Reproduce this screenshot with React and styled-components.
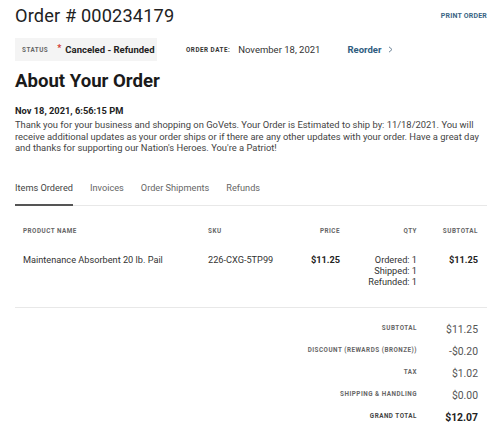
import React from "react";
import styled, { createGlobalStyle } from "styled-components";

const Global = createGlobalStyle`
  html, body { margin: 0; padding: 0; background: #fff; }
  body { font-family: Roboto, "Liberation Sans", Arial, sans-serif; color: #333; }
  * { box-sizing: border-box; }
`;

const Page = styled.div`
  width: 500px;
  padding: 5px 13px 0 15px;
`;

const HeaderRow = styled.div`
  display: flex;
  justify-content: space-between;
  align-items: flex-start;
`;

const Title = styled.h1`
  margin: 0;
  font-size: 18.2px;
  line-height: 22px;
  font-weight: 400;
  color: #222;
  letter-spacing: 0.15px;
`;

const LinkButton = styled.a`
  margin-top: 6px;
  font-size: 7px;
  line-height: 10px;
  font-weight: 700;
  letter-spacing: 0.2px;
  color: #3a6584;
  text-decoration: none;
  text-transform: uppercase;
`;

const MetaRow = styled.div`
  display: flex;
  align-items: center;
  margin-top: 11px;
  height: 23px;
`;

const StatusBox = styled.div`
  display: flex;
  align-items: center;
  flex: none;
  height: 23px;
  width: 142px;
  padding: 0 0 0 7px;
  background: #f4f4f4;
  white-space: nowrap;
`;

const SmallLabel = styled.span`
  font-size: 6.3px;
  font-weight: 700;
  letter-spacing: 0.5px;
  text-transform: uppercase;
  white-space: nowrap;
  color: ${(p) => p.$color || "#666"};
`;

const Asterisk = styled.span`
  color: #d0342c;
  font-size: 9px;
  font-weight: 700;
  margin: 5px 4px 0 9px;
  align-self: flex-start;
`;

const StatusText = styled.span`
  font-size: 9.5px;
  font-weight: 700;
  color: #222;
`;

const DateGroup = styled.div`
  display: flex;
  align-items: center;
  margin-left: 29px;
  gap: 8px;
`;

const DateValue = styled.span`
  font-size: 9.5px;
  color: #333;
  white-space: nowrap;
`;

const Reorder = styled.a`
  display: flex;
  align-items: center;
  gap: 7px;
  margin-left: 27px;
  font-size: 9.5px;
  font-weight: 700;
  color: #2f5d80;
  text-decoration: none;
`;

const Chevron = styled.svg`
  width: 5px;
  height: 7px;
`;

const Heading = styled.h2`
  margin: 9px 0 0;
  font-size: 18.6px;
  line-height: 22px;
  font-weight: 700;
  color: #1a1a1a;
`;

const Stamp = styled.div`
  margin-top: 13px;
  font-size: 9.3px;
  line-height: 11.3px;
  font-weight: 700;
  color: #222;
`;

const Message = styled.p`
  margin: 3px 0 0;
  font-size: 9.4px;
  line-height: 11.3px;
  color: #444;
`;

const Tabs = styled.div`
  display: flex;
  gap: 17px;
  margin-top: 29px;
  border-bottom: 1px solid #e8e8e8;
`;

const Tab = styled.div`
  font-size: 9.2px;
  line-height: 12px;
  color: ${(p) => (p.$active ? "#444" : "#666")};
  padding-bottom: 10px;
  margin-bottom: -1px;
  border-bottom: 2px solid ${(p) => (p.$active ? "#555" : "transparent")};
`;

const Grid = styled.div`
  display: grid;
  grid-template-columns: 185px 82px 50px 77px 61px;
  padding: 0 9px 0 8px;
`;

const HeadCell = styled.div`
  font-size: 6.3px;
  line-height: 10px;
  font-weight: 700;
  letter-spacing: 0.5px;
  text-transform: uppercase;
  color: #666;
  text-align: ${(p) => (p.$right ? "right" : "left")};
  padding-top: 20px;
`;

const Cell = styled.div`
  font-size: 9.2px;
  line-height: 11px;
  font-weight: ${(p) => (p.$bold ? 700 : 400)};
  color: ${(p) => (p.$bold ? "#222" : "#333")};
  text-align: ${(p) => (p.$right ? "right" : "left")};
  padding-top: 18px;
  padding-bottom: 20px;
`;

const Divider = styled.div`
  border-top: 1px solid #e8e8e8;
`;

const Totals = styled.div`
  display: grid;
  grid-template-columns: 1fr 61px;
  grid-auto-rows: 22px;
  align-items: center;
  padding: 10px 9px 0 8px;
`;

const TotalLabel = styled.div`
  font-size: 6.3px;
  font-weight: 700;
  letter-spacing: 0.5px;
  text-transform: uppercase;
  color: ${(p) => (p.$strong ? "#444" : "#666")};
  text-align: right;
  padding-bottom: 3px;
`;

const TotalValue = styled.div`
  font-size: 10.4px;
  font-weight: ${(p) => (p.$strong ? 700 : 400)};
  color: ${(p) => (p.$strong ? "#222" : "#555")};
  text-align: right;
`;

const totals = [
  ["Subtotal", "$11.25"],
  ["Discount (Rewards (Bronze))", "-$0.20"],
  ["Tax", "$1.02"],
  ["Shipping & Handling", "$0.00"],
  ["Grand Total", "$12.07", true],
];

export default function App() {
  return (
    <>
      <Global />
      <Page>
        <HeaderRow>
          <Title>Order # 000234179</Title>
          <LinkButton>Print Order</LinkButton>
        </HeaderRow>
        <MetaRow>
          <StatusBox>
            <SmallLabel>Status</SmallLabel>
            <Asterisk>*</Asterisk>
            <StatusText>Canceled - Refunded</StatusText>
          </StatusBox>
          <DateGroup>
            <SmallLabel $color="#333">Order Date:</SmallLabel>
            <DateValue>November 18, 2021</DateValue>
          </DateGroup>
          <Reorder>
            Reorder
            <Chevron viewBox="0 0 5 7">
              <path d="M1 0.8 L4 3.5 L1 6.2" fill="none" stroke="#6b8296" strokeWidth="1" />
            </Chevron>
          </Reorder>
        </MetaRow>
        <Heading>About Your Order</Heading>
        <Stamp>Nov 18, 2021, 6:56:15 PM</Stamp>
        <Message>
          Thank you for your business and shopping on GoVets. Your Order is Estimated to ship by: 11/18/2021. You will
          receive additional updates as your order ships or if there are any other updates with your order. Have a great day
          and thanks for supporting our Nation's Heroes. You're a Patriot!
        </Message>
        <Tabs>
          <Tab $active>Items Ordered</Tab>
          <Tab>Invoices</Tab>
          <Tab>Order Shipments</Tab>
          <Tab>Refunds</Tab>
        </Tabs>
        <Grid>
          <HeadCell>Product Name</HeadCell>
          <HeadCell>SKU</HeadCell>
          <HeadCell $right>Price</HeadCell>
          <HeadCell $right>Qty</HeadCell>
          <HeadCell $right>Subtotal</HeadCell>
          <Cell>Maintenance Absorbent 20 lb. Pail</Cell>
          <Cell>226-CXG-5TP99</Cell>
          <Cell $right $bold>$11.25</Cell>
          <Cell $right>
            Ordered: 1<br />Shipped: 1<br />Refunded: 1
          </Cell>
          <Cell $right $bold>$11.25</Cell>
        </Grid>
        <Divider />
        <Totals>
          {totals.map(([label, value, strong]) => (
            <React.Fragment key={label}>
              <TotalLabel $strong={strong}>{label}</TotalLabel>
              <TotalValue $strong={strong}>{value}</TotalValue>
            </React.Fragment>
          ))}
        </Totals>
      </Page>
    </>
  );
}
